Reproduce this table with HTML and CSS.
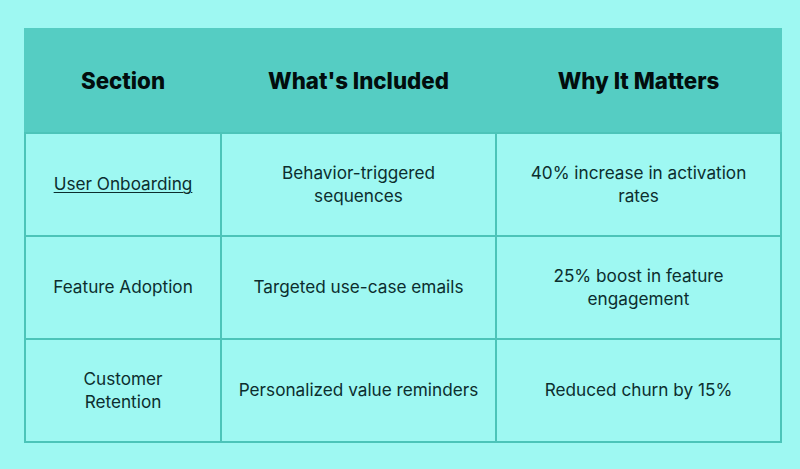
FILE: index.html
```html
<!DOCTYPE html>
<html>
<head>
<meta charset="utf-8">
<link rel="stylesheet" href="styles.css">
</head>
<body>
<div class="page">
  <table class="grid">
    <colgroup>
      <col class="c1"><col class="c2"><col class="c3">
    </colgroup>
    <thead>
      <tr><th>Section</th><th>What's Included</th><th>Why It Matters</th></tr>
    </thead>
    <tbody>
      <tr><td><span class="link">User Onboarding</span></td><td>Behavior-triggered<br>sequences</td><td>40% increase in activation<br>rates</td></tr>
      <tr><td>Feature Adoption</td><td>Targeted use-case emails</td><td>25% boost in feature<br>engagement</td></tr>
      <tr><td>Customer<br>Retention</td><td>Personalized value reminders</td><td>Reduced churn by 15%</td></tr>
    </tbody>
  </table>
</div>
</body>
</html>
```
FILE: styles.css
```css
html, body {
  margin: 0;
  padding: 0;
  background: #9ef8f2;
}
.page {
  width: 800px;
  height: 469px;
  padding: 28px 0 0 24px;
  box-sizing: border-box;
}
.grid {
  border-collapse: collapse;
  width: 756px;
  table-layout: fixed;
  font-family: Inter, "Noto Sans", sans-serif;
  color: #0c2e2e;
}
.c1 { width: 196px; }
.c2 { width: 275px; }
.c3 { width: 285px; }
th {
  background: #55cdc3;
  height: 104px;
  padding: 0 0 2px;
  font-size: 22.3px;
  font-weight: 800;
  color: #020d0d;
  border: 2px solid #55cdc3;
  border-bottom: 2px solid #4cc4b9;
  text-align: center;
  box-sizing: border-box;
}
td {
  height: 103px;
  padding: 0 8px 2px;
  font-size: 17.2px;
  line-height: 23px;
  text-align: center;
  border: 2px solid #4cc4b9;
  box-sizing: border-box;
}
.link {
  text-decoration: underline;
  text-underline-offset: 2px;
  text-decoration-thickness: 1px;
}
```
